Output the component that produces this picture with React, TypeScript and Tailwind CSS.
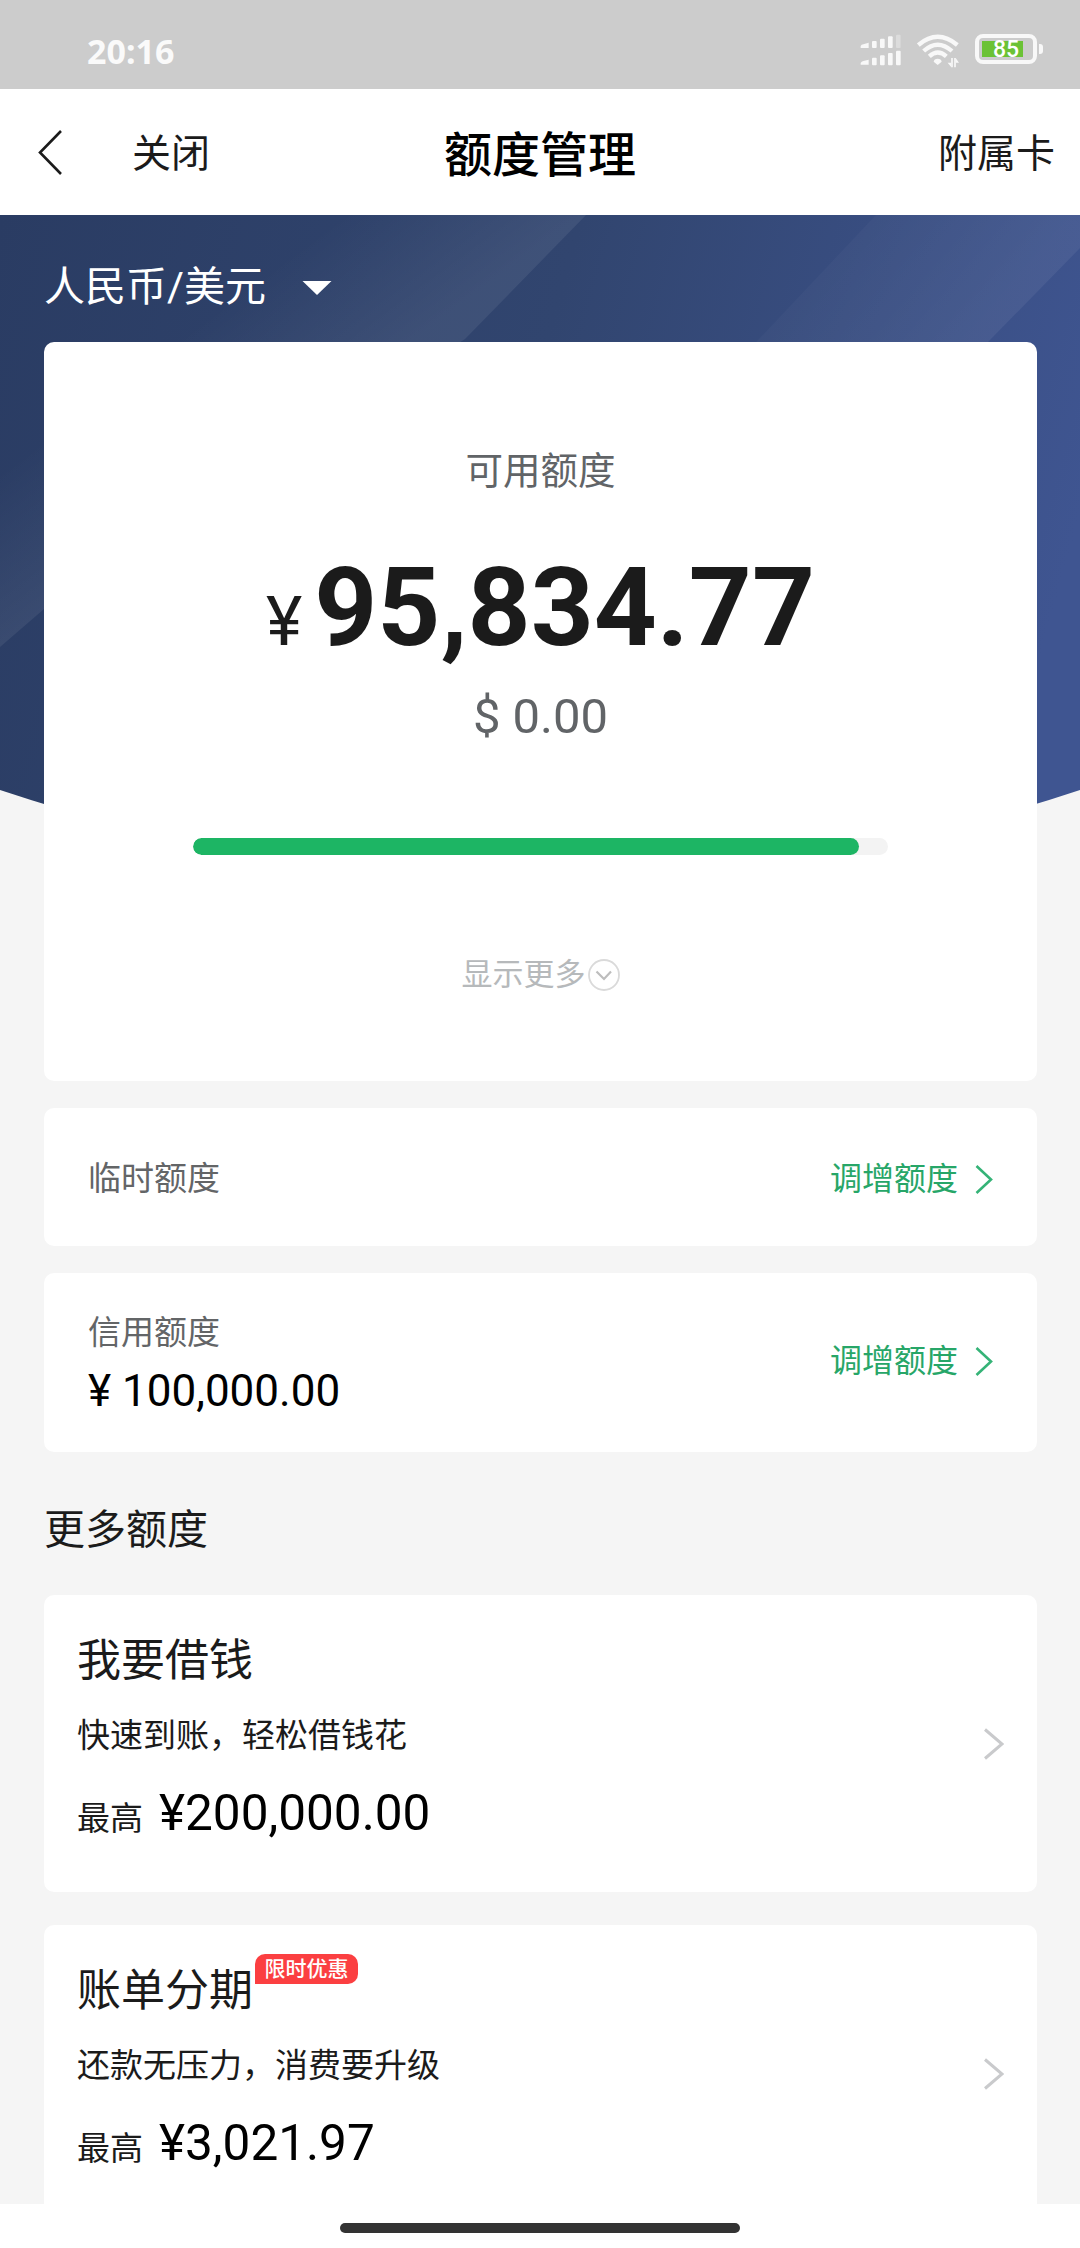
import type { ReactNode } from 'react';

interface QuotaRowProps {
  label: string;
  amount?: string;
  className?: string;
  actionClassName?: string;
}

interface ProductCardProps {
  title: string;
  desc: string;
  amount: string;
  tag?: string;
}

const available = 95834.77;
const total = 100000;

const products: ProductCardProps[] = [
  { title: '我要借钱', desc: '快速到账，轻松借钱花', amount: '¥200,000.00' },
  { title: '账单分期', desc: '还款无压力，消费要升级', amount: '¥3,021.97', tag: '限时优惠' },
];

function SignalIcon() {
  return (
    <svg width="41" height="32" viewBox="0 0 123 96" fill="#f8f8f8">
      <path d="M2 36 Q4 32 10 31 L26 26 V42 H2Z" />
      <rect x="36" y="21" width="14" height="21" rx="3" />
      <rect x="60" y="14" width="14" height="28" rx="3" />
      <rect x="84" y="7" width="14" height="35" rx="3" />
      <rect x="108" y="2" width="14" height="40" rx="3" opacity="0.35" />
      <path d="M2 87 Q4 82 10 81 L26 77 V92 H2Z" />
      <rect x="36" y="71" width="14" height="23" rx="3" />
      <rect x="60" y="64" width="14" height="30" rx="3" />
      <rect x="84" y="57" width="14" height="37" rx="3" />
      <rect x="108" y="50" width="14" height="44" rx="3" />
    </svg>
  );
}

function WifiIcon() {
  return (
    <svg width="42" height="34" viewBox="0 0 126 102" fill="none">
      <g stroke="#f8f8f8" strokeWidth="13">
        <path d="M4 33 Q62 -16 121 33" />
        <path d="M20 51 Q62 13 105 51" />
        <path d="M37 67 Q62 44 88 67" />
      </g>
      <path d="M62 74 a12 10 0 0 1 12 9 L62 93 L50 83 a12 10 0 0 1 12 -9Z" fill="#f8f8f8" />
      <path d="M105 72 V100 M114 72 V100" stroke="#f8f8f8" strokeWidth="5" />
      <path d="M103 100 L92 86 H103Z M116 72 L126 86 H116Z" fill="#f8f8f8" />
    </svg>
  );
}

function Battery({ level }: { level: number }) {
  return (
    <div className="flex items-center gap-[2px]">
      <div className="relative h-[30px] w-[62px] rounded-[8px] border-4 border-[#f8f8f8] p-[3px]">
        <div className="h-full w-[41px] bg-[#6bc235]" />
        <span className="absolute inset-0 flex items-center justify-center pt-px text-[23px] font-medium leading-none text-white">
          {level}
        </span>
      </div>
      <div className="h-[10px] w-1 rounded-r-[3px] bg-[#f8f8f8]" />
    </div>
  );
}

function StatusBar() {
  return (
    <div className="flex h-[89px] items-start justify-between bg-[#cccccc] pl-[87px] pr-[37px]">
      <span className="mt-[31px] font-['Noto_Sans'] text-[34px] font-bold leading-[40px] text-[#fafafa]">20:16</span>
      <div className="mt-[34px] flex items-start gap-[16px]">
        <SignalIcon />
        <WifiIcon />
        <Battery level={85} />
      </div>
    </div>
  );
}

function Header() {
  return (
    <header className="flex h-[126px] items-center bg-white pl-[38px] pr-[25px] text-[39px] leading-[48px] text-[#1b1b1b]">
      <div className="flex w-[406px] items-center">
        <svg width="25" height="45" viewBox="0 0 25 45" fill="none" stroke="#1b1b1b" strokeWidth="2.6">
          <path d="M23 1 L2 22.5 L23 44" />
        </svg>
        <span className="ml-[69px] mt-[4px]">关闭</span>
      </div>
      <h1 className="mt-[8px] text-[48px] font-medium text-black">额度管理</h1>
      <div className="mt-[4px] flex-1 text-right">附属卡</div>
    </header>
  );
}

function HeroBackground() {
  return (
    <svg className="absolute inset-x-0 top-0" width="1080" height="640" viewBox="0 0 1080 640">
      <defs>
        <linearGradient id="base" x1="0" y1="0" x2="1080" y2="300" gradientUnits="userSpaceOnUse">
          <stop offset="0" stopColor="#2a3c63" />
          <stop offset="0.5" stopColor="#31456f" />
          <stop offset="1" stopColor="#3f5591" />
        </linearGradient>
        <linearGradient id="left" x1="123" y1="164" x2="210" y2="280" gradientUnits="userSpaceOnUse">
          <stop offset="0" stopColor="#fff" stopOpacity="0" />
          <stop offset="1" stopColor="#fff" stopOpacity="0.07" />
        </linearGradient>
        <linearGradient id="right" x1="800" y1="60" x2="930" y2="170" gradientUnits="userSpaceOnUse">
          <stop offset="0" stopColor="#fff" stopOpacity="0.02" />
          <stop offset="1" stopColor="#fff" stopOpacity="0.06" />
        </linearGradient>
        <clipPath id="arc">
          <path d="M0 0 H1080 V575 Q540 755 0 575Z" />
        </clipPath>
      </defs>
      <g clipPath="url(#arc)">
        <rect width="1080" height="640" fill="url(#base)" />
        <path d="M0 0 H586 L465 124 L44 394 L0 432Z" fill="url(#left)" />
        <path d="M876 0 H1080 V33 L988 127 L700 420 L480 420Z" fill="url(#right)" />
      </g>
    </svg>
  );
}

function Card({ className = '', children }: { className?: string; children: ReactNode }) {
  return <section className={`rounded-[10px] bg-white ${className}`}>{children}</section>;
}

function AvailableCard() {
  const percent = (available / total) * 100;

  return (
    <Card className="flex h-[739px] flex-col items-center pt-[109px]">
      <div className="text-[37.5px] leading-[40px] text-[#616467]">可用额度</div>
      <div className="mt-[62px] flex h-[110px] items-baseline text-[#1b1b1b]">
        <span className="mr-[12px] text-[69px] leading-[110px]">¥</span>
        <span className="text-[110px] font-bold leading-[110px]">95,834.77</span>
      </div>
      <div className="mt-[29px] text-[49px] leading-[50px] text-[#616467]">$ 0.00</div>
      <div className="mt-[96px] h-[17px] w-[695px] overflow-hidden rounded-full bg-[#f3f3f3]">
        <div className="h-full rounded-full bg-[#1db564]" style={{ width: `${percent}%` }} />
      </div>
      <button className="mt-[104px] flex items-center gap-[2px] text-[31px] leading-[32px] text-[#b6b9bb]">
        显示更多
        <svg width="32" height="32" viewBox="0 0 32 32" fill="none">
          <circle cx="16" cy="16" r="15" stroke="#dadada" strokeWidth="1.8" />
          <path d="M8.5 12.5 L16 20 L23 12.5" stroke="#bdbdbd" strokeWidth="2.2" />
        </svg>
      </button>
    </Card>
  );
}

function QuotaRow({ label, amount, className, actionClassName }: QuotaRowProps) {
  return (
    <Card className={`flex justify-between pl-[44px] pr-[44px] ${className}`}>
      <div>
        <div className="text-[33px] leading-[40px] text-[#636567]">{label}</div>
        {amount && <div className="mt-[13px] text-[44px] leading-[50px] text-black">{amount}</div>}
      </div>
      <button className={`flex items-center self-start text-[32px] leading-[40px] text-[#27a668] ${actionClassName}`}>
        调增额度
        <svg className="ml-[17px]" width="18" height="29" viewBox="0 0 18 29" fill="none" stroke="#35b377" strokeWidth="2.6">
          <path d="M1.5 1 L16 14.5 L1.5 28" />
        </svg>
      </button>
    </Card>
  );
}

function ProductCard({ title, desc, amount, tag }: ProductCardProps) {
  return (
    <Card className="flex h-[297px] shrink-0 justify-between pl-[33px] pr-[33px]">
      <div>
        <div className="flex pt-[36px] text-[44px] leading-[60px] text-[#1b1b1b]">
          {title}
          {tag && (
            <span className="-mt-[7px] ml-[2px] h-[30px] w-[103px] rounded-[10px] rounded-bl-none bg-[#fb3f41] text-center text-[21px] font-medium leading-[30px] text-white">
              {tag}
            </span>
          )}
        </div>
        <div className="mt-[25px] text-[33px] leading-[40px] text-[#1b1b1b]">{desc}</div>
        <div className="mt-[27px] flex items-baseline">
          <span className="text-[33px] leading-[60px] text-[#1b1b1b]">最高</span>
          <span className="ml-[16px] text-[49.5px] leading-[60px] text-black">{amount}</span>
        </div>
      </div>
      <svg className="mt-[133px]" width="20" height="32" viewBox="0 0 20 32" fill="none" stroke="#c9cacc" strokeWidth="3">
        <path d="M1 1.5 L18 16 L1 30.5" />
      </svg>
    </Card>
  );
}

export default function App() {
  return (
    <div className="flex h-[2248px] w-[1080px] flex-col overflow-hidden bg-white font-['Roboto','Noto_Sans_CJK_SC',sans-serif]">
      <StatusBar />
      <Header />

      <main className="relative h-[1989px] overflow-hidden bg-[#f5f5f5]">
        <HeroBackground />
        <div className="relative flex flex-col pl-[44px] pr-[43px]">
          <div className="flex h-[127px] items-center text-[41px] leading-[50px] text-white">
            <span className="mt-[16px]">人民币/美元</span>
            <svg className="ml-[36px] mt-[18px]" width="30" height="14" viewBox="0 0 30 14" fill="#fff">
              <path d="M0.5 0 H29.5 L15 14Z" />
            </svg>
          </div>

          <AvailableCard />
          <QuotaRow label="临时额度" className="mt-[27px] h-[138px] pt-[51px]" />
          <QuotaRow label="信用额度" amount="¥ 100,000.00" className="mt-[27px] h-[179px] pt-[40px]" actionClassName="mt-[28px]" />

          <h2 className="mt-[53px] text-[41px] leading-[50px] text-[#1b1b1b]">更多额度</h2>
          <div className="mt-[40px] flex flex-col gap-[33px]">
            {products.map((p) => (
              <ProductCard key={p.title} {...p} />
            ))}
          </div>
        </div>
      </main>

      <div className="flex flex-1 justify-center pt-[19px]">
        <div className="h-[10px] w-[400px] rounded-full bg-[#333333]" />
      </div>
    </div>
  );
}
